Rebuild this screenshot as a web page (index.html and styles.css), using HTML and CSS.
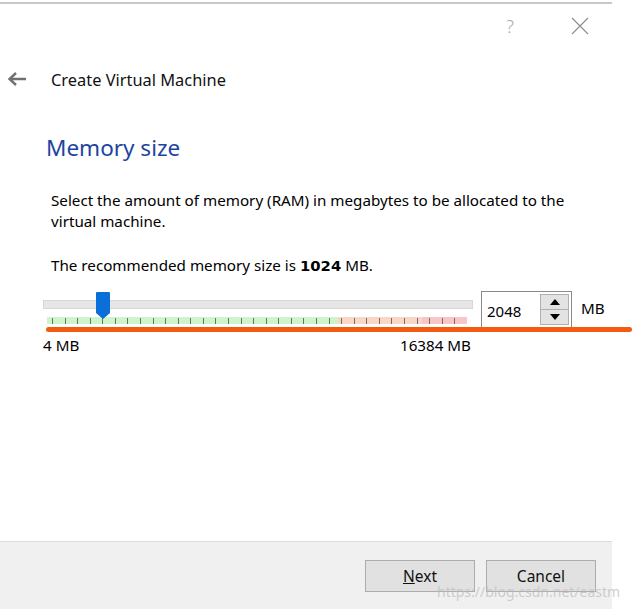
FILE: index.html
```html
<!DOCTYPE html>
<html>
<head>
<meta charset="utf-8">
<link rel="stylesheet" href="styles.css">
</head>
<body>
<div class="window">
  <div class="titlebar">
    <span class="help">?</span>
    <svg class="close" width="18" height="18" viewBox="0 0 18 18"><path d="M1 1 L17 17 M17 1 L1 17" stroke="#8c8c8c" stroke-width="1.1" fill="none"/></svg>
  </div>
  <div class="header">
    <svg class="back" width="20" height="16" viewBox="0 0 20 16"><path d="M19 8 H3 M9 2 L2.5 8 L9 14" stroke="#707070" stroke-width="2.4" fill="none"/></svg>
    <span class="header-title">Create Virtual Machine</span>
  </div>
  <div class="content">
    <h1 class="page-title">Memory size</h1>
    <p class="desc">Select the amount of memory (RAM) in megabytes to be allocated to the virtual machine.</p>
    <p class="recommend">The recommended memory size is <b class="num">1024</b> MB.</p>
    <div class="mem-row">
      <div class="slider">
        <div class="track"></div>
        <div class="band"></div>
        <svg class="handle" width="14" height="27" viewBox="0 0 14 27"><path d="M1 0 H13 Q14 0 14 1 V21 L7 27 L0 21 V1 Q0 0 1 0 Z" fill="#0b6fd9"/></svg>
      </div>
      <div class="spin">
        <span class="spin-value">2048</span>
        <div class="spin-buttons">
          <div class="spin-btn"><svg width="10" height="6" viewBox="0 0 10 6"><path d="M0 6 L5 0 L10 6 Z" fill="#000"/></svg></div>
          <div class="spin-btn"><svg width="10" height="6" viewBox="0 0 10 6"><path d="M0 0 L5 6 L10 0 Z" fill="#000"/></svg></div>
        </div>
      </div>
      <span class="unit">MB</span>
      <div class="annotation"></div>
    </div>
    <div class="limits">
      <span>4 MB</span>
      <span>16384 MB</span>
    </div>
  </div>
  <div class="footer">
    <button class="btn"><u>N</u>ext</button>
    <button class="btn">Cancel</button>
  </div>
</div>
<div class="watermark">https://blog.csdn.net/eastm</div>
</body>
</html>
```

FILE: styles.css
```css
html, body {
  margin: 0;
  padding: 0;
  background: #ffffff;
}
body {
  font-family: "Noto Sans", "Open Sans", sans-serif;
  color: #000;
  width: 634px;
  height: 609px;
  overflow: hidden;
  position: relative;
}
.window {
  width: 612px;
  height: 607px;
  margin-top: 2px;
  border-top: 2px solid #c9c9c9;
  display: flex;
  flex-direction: column;
  box-sizing: border-box;
}
.titlebar {
  height: 44px;
  display: flex;
  align-items: center;
  justify-content: flex-end;
  padding-right: 23px;
  gap: 57px;
}
.help {
  font-size: 18px;
  color: #a8a8a8;
  font-weight: 300;
}
.close {
  display: block;
}
.header {
  height: 62px;
  display: flex;
  align-items: center;
  padding-left: 7px;
}
.back {
  display: block;
}
.header-title {
  margin-left: 24px;
  font-size: 16.4px;
  color: #111;
}
.content {
  flex: 1;
  padding-left: 43px;
}
.page-title {
  margin: 23px 0 0 3px;
  font-size: 22.5px;
  font-weight: 400;
  color: #1c45a0;
  line-height: 30px;
}
.desc {
  margin: 27px 0 0 8px;
  font-size: 15.2px;
  line-height: 21px;
  width: 540px;
}
.recommend {
  margin: 23px 0 0 8px;
  font-size: 15.2px;
  line-height: 21px;
}
.num {
  font-family: "DejaVu Sans", sans-serif;
  font-size: 14.8px;
}
.mem-row {
  position: relative;
  margin-top: 15px;
  display: flex;
  align-items: flex-start;
}
.slider {
  position: relative;
  width: 430px;
  height: 36px;
  margin-top: 1px;
}
.track {
  margin-top: 8px;
  height: 7px;
  background: #e6e6e6;
  border: 1px solid #d7d7d7;
}
.band {
  margin: 8px 0 0 4px;
  width: 420px;
  height: 7px;
  background:
    repeating-linear-gradient(to right, #6f6f6f 0 1px, transparent 1px 12.57px) 4.7px 1px / 100% 6px no-repeat,
    linear-gradient(to right, #cdf5cd 0 291px, #fad6c7 291px 375px, #f8c6c6 375px);
}
.handle {
  position: absolute;
  left: 53px;
  top: 0;
}
.spin {
  margin-left: 8px;
  width: 91px;
  height: 38px;
  border: 1px solid #8a8a8a;
  box-sizing: border-box;
  display: flex;
  align-items: center;
  justify-content: space-between;
  padding: 0 2px 0 5px;
}
.spin-value {
  font-size: 15px;
  margin-top: 1px;
}
.spin-buttons {
  width: 29px;
  height: 31px;
  display: flex;
  flex-direction: column;
  align-self: flex-start;
  margin-top: 2px;
}
.spin-btn {
  flex: 1;
  background: #e3e3e3;
  border: 1px solid #b0b0b0;
  display: flex;
  align-items: center;
  justify-content: center;
}
.spin-btn + .spin-btn {
  border-top: none;
}
.unit {
  margin-left: 9px;
  font-size: 15.2px;
  margin-top: 7px;
}
.annotation {
  position: absolute;
  left: 3px;
  top: 36px;
  width: 586px;
  height: 5px;
  border-radius: 3px;
  background: #f35b10;
}
.limits {
  width: 430px;
  display: flex;
  justify-content: space-between;
  padding-right: 2px;
  box-sizing: border-box;
  margin-top: 6px;
  font-size: 15.2px;
  line-height: 21px;
}
.footer {
  height: 68px;
  background: #f0f0f0;
  border-top: 1px solid #dcdcdc;
  box-sizing: border-box;
  display: flex;
  justify-content: flex-end;
  align-items: flex-start;
  padding: 18px 16px 0 0;
  gap: 11px;
}
.btn {
  width: 110px;
  height: 32px;
  background: #e1e1e1;
  border: 1px solid #adadad;
  font-family: "Noto Sans", "Open Sans", sans-serif;
  font-size: 15.5px;
  color: #111;
  padding: 0;
}
.watermark {
  position: absolute;
  left: 437px;
  top: 582px;
  font-family: "Noto Sans", sans-serif;
  font-size: 14px;
  color: rgba(190, 190, 190, 0.75);
}
```
